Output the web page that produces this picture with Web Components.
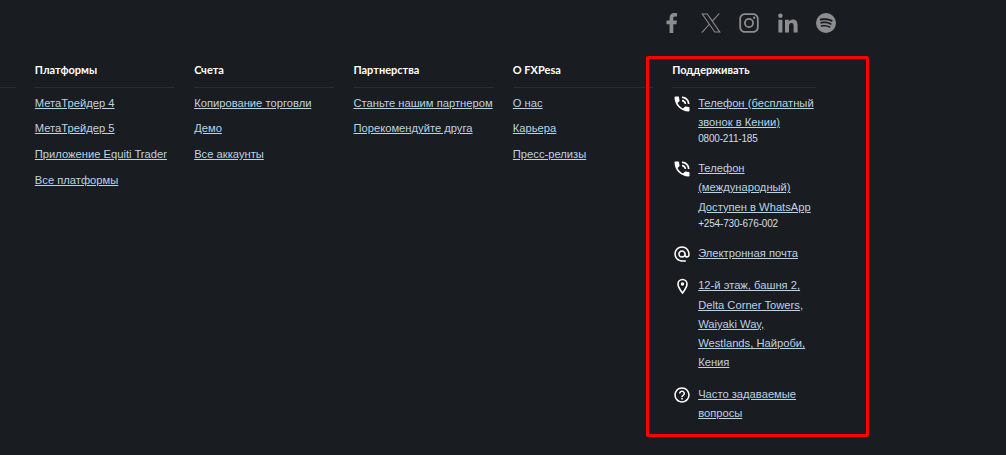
<!DOCTYPE html>
<html lang="ru">
<head>
<meta charset="utf-8">
<title>FXPesa footer</title>
<style>
  html, body { margin: 0; background: #191c20; }
  body { height: 455px; overflow: hidden; }
</style>
</head>
<body>
<site-footer>
  <social-bar slot="social"></social-bar>
  <footer-col></footer-col>
  <footer-col heading="Платформы">
    <footer-link>МетаТрейдер 4</footer-link>
    <footer-link>МетаТрейдер 5</footer-link>
    <footer-link>Приложение Equiti Trader</footer-link>
    <footer-link>Все платформы</footer-link>
  </footer-col>
  <footer-col heading="Счета">
    <footer-link>Копирование торговли</footer-link>
    <footer-link>Демо</footer-link>
    <footer-link>Все аккаунты</footer-link>
  </footer-col>
  <footer-col heading="Партнерства">
    <footer-link>Станьте нашим партнером</footer-link>
    <footer-link>Порекомендуйте друга</footer-link>
  </footer-col>
  <footer-col heading="О FXPesa">
    <footer-link>О нас</footer-link>
    <footer-link>Карьера</footer-link>
    <footer-link>Пресс-релизы</footer-link>
  </footer-col>
  <footer-col heading="Поддерживать" class="support">
    <support-item icon="phone"><a>Телефон (бесплатный звонок в Кении)</a><small>0800-211-185</small></support-item>
    <support-item icon="phone"><a>Телефон (международный) Доступен в WhatsApp</a><small>+254-730-676-002</small></support-item>
    <support-item icon="mail"><a>Электронная почта</a></support-item>
    <support-item icon="pin"><a>12-й этаж, башня 2, Delta Corner Towers, Waiyaki Way, Westlands, Найроби, Кения</a></support-item>
    <support-item icon="help"><a>Часто задаваемые вопросы</a></support-item>
  </footer-col>
  <red-frame slot="overlay"></red-frame>
</site-footer>

<script>
class SiteFooter extends HTMLElement {
  constructor() {
    super();
    this.attachShadow({ mode: 'open' });
    this.shadowRoot.innerHTML = `
      <style>
        :host {
          display: block;
          position: relative;
          height: 455px;
          background: #191c20;
          font-family: "Liberation Sans", Arial, sans-serif;
        }
        .top {
          display: flex;
          justify-content: flex-end;
          padding: 12.5px 170px 0 0;
          height: 43px;
          box-sizing: border-box;
        }
        .cols {
          display: grid;
          grid-template-columns: 15.5px 140px 140px 140px 140px 144px;
          column-gap: 19.33px;
          padding-top: 18px;
        }
      </style>
      <div class="top"><slot name="social"></slot></div>
      <div class="cols"><slot></slot></div>
      <slot name="overlay"></slot>
    `;
  }
}

class SocialBar extends HTMLElement {
  constructor() {
    super();
    this.attachShadow({ mode: 'open' });
    this.shadowRoot.innerHTML = `
      <style>
        :host { display: flex; align-items: center; gap: 18.5px; color: #8b8d8f; height: 20px; }
        svg { display: block; width: 20px; height: 20px; fill: currentColor; }
      </style>
      <svg viewBox="-4.5 0 20 20"><path d="M3.1 20V11.2H0V7.6H3.1V5C3.1 1.8 5 .1 7.7.1C9 .1 10.2.2 10.5.3V3.5H8.6C7.1 3.5 6.800 4.200 6.800 5.300V7.600H10.400L9.900 11.200H6.800V20Z"/></svg>
      <svg viewBox="0 0 20 20"><path fill-rule="evenodd" d="M.2.4H6.500L11.400 7.300L17.500.4H18.900L12 8.200L19.800 19.600H13.500L8.300 12.100L1.700 19.600H.2L7.700 11.200ZM2.200 1.400L14 18.600H17.800L6 1.400Z"/></svg>
      <svg viewBox="0 0 20 20"><path fill-rule="evenodd" d="M5.800.3H14.200C17.300.3 19.700 2.700 19.700 5.800V14.200C19.700 17.300 17.300 19.700 14.200 19.700H5.800C2.700 19.700.3 17.300.3 14.200V5.800C.3 2.700 2.700.3 5.800.3ZM5.800 2.100C3.700 2.100 2.100 3.700 2.100 5.800V14.200C2.100 16.300 3.700 17.900 5.800 17.900H14.200C16.300 17.900 17.900 16.300 17.900 14.200V5.800C17.900 3.700 16.300 2.100 14.200 2.100ZM10 5A5 5 0 1 1 10 15A5 5 0 1 1 10 5ZM10 6.800A3.200 3.200 0 1 0 10 13.200A3.200 3.200 0 1 0 10 6.800ZM15.200 3.600A1.200 1.200 0 1 1 15.200 6A1.200 1.200 0 1 1 15.200 3.600Z"/></svg>
      <svg viewBox="0 0 20 20"><path d="M.4 6.700H4.400V19.600H.4ZM2.400.4A2.300 2.300 0 1 1 2.400 5A2.300 2.300 0 1 1 2.400.4ZM7 6.700H10.800V8.500C11.400 7.400 12.800 6.400 14.800 6.400C18.800 6.400 19.600 9 19.600 12.500V19.600H15.600V13.300C15.600 11.800 15.600 9.900 13.500 9.900C11.400 9.900 11 11.500 11 13.200V19.600H7Z"/></svg>
      <svg viewBox="0 0 20 20"><path fill-rule="evenodd" d="M10 0A10 10 0 1 1 10 20A10 10 0 1 1 10 0ZM4.600 5.600C4 5.800 3.700 6.300 3.800 6.900C4 7.500 4.500 7.800 5.100 7.600C8 6.900 12.300 7 15 8.600C15.500 8.900 16.100 8.700 16.400 8.200C16.700 7.700 16.500 7.100 16 6.800C12.700 4.900 7.900 4.800 4.600 5.600ZM4.900 9C4.400 9.200 4.100 9.600 4.300 10.100C4.400 10.600 4.900 10.900 5.400 10.700C8 10 11.900 10.300 14.300 11.700C14.700 12 15.200 11.800 15.500 11.400C15.700 11 15.600 10.500 15.200 10.200C12.300 8.500 8 8.200 4.900 9ZM5.300 12.300C4.900 12.400 4.700 12.800 4.800 13.200C4.900 13.600 5.300 13.800 5.700 13.700C8.100 13.100 11.200 13.300 13.500 14.700C13.800 14.900 14.200 14.800 14.400 14.500C14.600 14.200 14.500 13.800 14.200 13.600C11.600 12 8.200 11.700 5.300 12.300Z"/></svg>
    `;
  }
}

class FooterCol extends HTMLElement {
  constructor() {
    super();
    this.attachShadow({ mode: 'open' });
  }

  connectedCallback() {
    const heading = this.getAttribute('heading') || '';
    this.shadowRoot.innerHTML = `
      <style>
        :host { display: block; min-width: 0; }
        h3 {
          margin: 0;
          height: 26px;
          border-bottom: 1px solid #2a2d31;
          font: 700 11px/17px Lato, "Liberation Sans", sans-serif;
          color: #fff;
        }
        .body { padding-top: 5.8px; }
      </style>
      <h3>${heading}</h3>
      <div class="body"><slot></slot></div>
    `;
  }
}

class FooterLink extends HTMLElement {
  constructor() {
    super();
    this.attachShadow({ mode: 'open' });
    this.shadowRoot.innerHTML = `
      <style>
        :host {
          display: block;
          font: 11.2px/19.2px "Liberation Sans", Arial, sans-serif;
          color: #bcd3e2;
          margin-bottom: 6.4px;
        }
        a { color: inherit; text-decoration: underline; }
      </style>
      <a><slot></slot></a>
    `;
  }
}

const ICONS = {
  phone: `<svg viewBox="0 0 24 24" fill="currentColor"><path d="M20 15.5c-1.250 0-2.450-.2-3.570-.57-.35-.11-.74-.03-1.020.24l-2.200 2.200c-2.830-1.440-5.150-3.750-6.590-6.590l2.200-2.210c.28-.26.36-.65.25-1C8.700 6.450 8.500 5.250 8.500 4c0-.55-.45-1-1-1H4c-.55 0-1 .45-1 1 0 9.390 7.610 17 17 17 .55 0 1-.45 1-1v-3.500c0-.55-.45-1-1-1zM19 12h2c0-4.970-4.030-9-9-9v2c3.870 0 7 3.130 7 7zm-4 0h2c0-2.760-2.240-5-5-5v2c1.660 0 3 1.340 3 3z"/></svg>`,
  mail: `<svg viewBox="-1 -1 26 26" fill="currentColor"><path d="M12 2C6.480 2 2 6.480 2 12s4.480 10 10 10h5v-2h-5c-4.340 0-8-3.660-8-8s3.660-8 8-8 8 3.660 8 8v1.430c0 .79-.71 1.570-1.500 1.570s-1.500-.78-1.500-1.570V12c0-2.760-2.240-5-5-5s-5 2.240-5 5 2.240 5 5 5c1.380 0 2.640-.56 3.540-1.470.65.89 1.770 1.470 2.960 1.470 1.970 0 3.500-1.600 3.500-3.570V12c0-5.520-4.480-10-10-10zm0 13c-1.660 0-3-1.340-3-3s1.340-3 3-3 3 1.340 3 3-1.340 3-3 3z"/></svg>`,
  pin: `<svg viewBox="0 0 20 20"><path fill="none" stroke="currentColor" stroke-width="1.600" d="M10.500 17C8 13.800 6 11 6 8A4.500 4.500 0 0 1 15 8C15 11 13 13.800 10.500 17Z"/><circle cx="10.500" cy="8" r="1.700" fill="currentColor"/></svg>`,
  help: `<svg viewBox="-1 -1 26 26" fill="currentColor"><path d="M11 18h2v-2h-2v2zm1-16C6.480 2 2 6.480 2 12s4.480 10 10 10 10-4.480 10-10S17.520 2 12 2zm0 18c-4.410 0-8-3.590-8-8s3.590-8 8-8 8 3.590 8 8-3.590 8-8 8zm0-14c-2.210 0-4 1.790-4 4h2c0-1.100.9-2 2-2s2 .9 2 2c0 2-3 1.750-3 5h2c0-2.250 3-2.500 3-5 0-2.210-1.790-4-4-4z"/></svg>`
};

class SupportItem extends HTMLElement {
  constructor() {
    super();
    this.attachShadow({ mode: 'open' });
  }

  connectedCallback() {
    const icon = ICONS[this.getAttribute('icon')] || '';
    this.shadowRoot.innerHTML = `
      <style>
        :host {
          display: flex;
          gap: 6px;
          margin-bottom: 12.6px;
          width: 144px;
          font: 11.2px/19.2px "Liberation Sans", Arial, sans-serif;
          color: #bcd3e2;
        }
        svg { flex: none; width: 20px; height: 20px; color: #fff; }
        .text { flex: 1; min-width: 0; }
        ::slotted(a) { color: #bcd3e2; text-decoration: underline; }
        ::slotted(small) { display: block; font-size: 10px; letter-spacing: -.17px; line-height: 14.4px; color: #d5dde3; }
      </style>
      ${icon}
      <div class="text"><slot></slot></div>
    `;
  }
}

class RedFrame extends HTMLElement {
  constructor() {
    super();
    this.attachShadow({ mode: 'open' });
    this.shadowRoot.innerHTML = `
      <style>
        :host {
          position: absolute;
          left: 646px;
          top: 56px;
          width: 223px;
          height: 381px;
          box-sizing: border-box;
          border: 3px solid #ff0000;
          border-radius: 2px;
          pointer-events: none;
        }
      </style>
    `;
  }
}

customElements.define('site-footer', SiteFooter);
customElements.define('social-bar', SocialBar);
customElements.define('footer-col', FooterCol);
customElements.define('footer-link', FooterLink);
customElements.define('support-item', SupportItem);
customElements.define('red-frame', RedFrame);
</script>
</body>
</html>
